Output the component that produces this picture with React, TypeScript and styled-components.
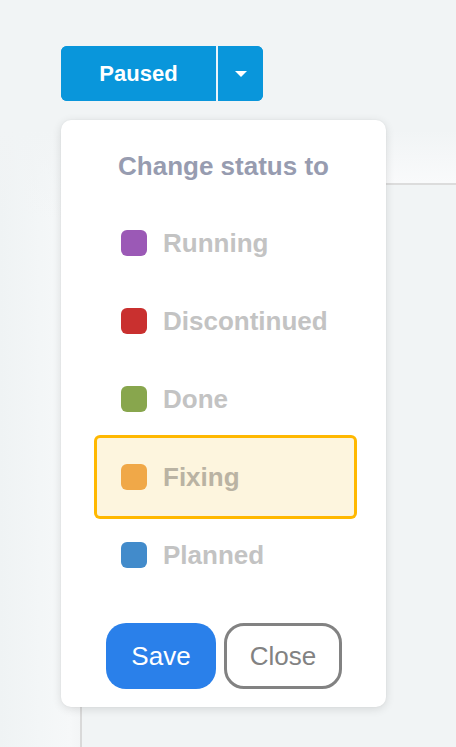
import React from "react";
import styled, { createGlobalStyle } from "styled-components";

const GlobalStyle = createGlobalStyle`
  * { box-sizing: border-box; }
  html, body { margin: 0; padding: 0; }
  body {
    font-family: "Liberation Sans", Arial, sans-serif;
    background: #f1f4f5;
  }
`;

const Page = styled.div`
  min-height: 100vh;
  display: flex;
  flex-direction: column;
  padding-top: 46px;
  background: #f1f4f5;
`;

const Toolbar = styled.div`
  padding-left: 61px;
  position: relative;
  z-index: 2;
`;

const Dropdown = styled.div`
  position: relative;
  display: inline-block;
`;

const SplitButton = styled.div`
  display: flex;
  height: 55px;
  border-radius: 6px;
  overflow: hidden;
  background: #0996db;
`;

const MainPart = styled.button`
  width: 155px;
  border: none;
  background: #0996db;
  color: #fff;
  font-family: "Liberation Sans", Arial, sans-serif;
  font-weight: 700;
  font-size: 22px;
  padding: 0;
  cursor: pointer;
`;

const Divider = styled.span`
  width: 2px;
  background: #e9f4fb;
`;

const CaretPart = styled.button`
  width: 45px;
  border: none;
  background: #0996db;
  display: flex;
  align-items: center;
  justify-content: center;
  padding: 0;
  cursor: pointer;
`;

const Caret = styled.span`
  width: 0;
  height: 0;
  border-left: 6.5px solid transparent;
  border-right: 6.5px solid transparent;
  border-top: 6.5px solid #fff;
  margin-top: 1px;
`;

const Popup = styled.div`
  position: absolute;
  top: calc(100% + 19px);
  left: 0;
  width: 325px;
  background: #fff;
  border-radius: 10px;
  box-shadow: 0 2px 10px rgba(0, 0, 0, 0.12), 0 0 2px rgba(0, 0, 0, 0.05);
  padding: 31px 0 18px;
  display: flex;
  flex-direction: column;
`;

const Title = styled.div`
  text-align: center;
  font-size: 26px;
  line-height: 30px;
  font-weight: 700;
  color: #979cb0;
  margin-bottom: 23px;
`;

const ItemList = styled.div`
  display: flex;
  flex-direction: column;
  padding: 0 32px 0 36px;
`;

const Item = styled.div<{ $selected?: boolean }>`
  height: 78px;
  display: flex;
  align-items: center;
  gap: 16px;
  padding-left: 24px;
  border-radius: 3px;
  background: ${(p) => (p.$selected ? "#fdf5de" : "transparent")};
  box-shadow: ${(p) => (p.$selected ? "0 0 0 3px #ffb800" : "none")};
  color: ${(p) => (p.$selected ? "#bab3a3" : "#c3c3c3")};
  font-size: 26px;
  line-height: 30px;
  font-weight: 700;
`;

const Swatch = styled.span<{ $color: string }>`
  width: 26px;
  height: 26px;
  border-radius: 6px;
  background: ${(p) => p.$color};
  flex: none;
`;

const Actions = styled.div`
  display: flex;
  gap: 8px;
  padding-left: 45px;
  margin-top: 29px;
`;

const SaveButton = styled.button`
  width: 110px;
  height: 66px;
  border: none;
  border-radius: 20px;
  background: #2a80ea;
  color: #fff;
  font-family: "Liberation Sans", Arial, sans-serif;
  font-size: 26px;
  padding: 0;
  cursor: pointer;
`;

const CloseButton = styled.button`
  width: 118px;
  height: 66px;
  border: 3px solid #828282;
  border-radius: 20px;
  background: #fff;
  color: #828282;
  font-family: "Liberation Sans", Arial, sans-serif;
  font-size: 26px;
  padding: 0;
  cursor: pointer;
`;

const Content = styled.div`
  flex: 1;
  display: flex;
  margin-top: 29px;
`;

const SideStrip = styled.div`
  width: 80px;
  flex: none;
  background:
    linear-gradient(to bottom, #f1f4f5 0px, rgba(241, 244, 245, 0) 90px),
    linear-gradient(to right, #eff3f4 0px, #f3f6f7 40px, #f6f8f9 70px, #f3f5f6 80px);
`;

const Panel = styled.div`
  flex: 1;
  display: flex;
  flex-direction: column;
`;

const PanelHeader = styled.div`
  height: 55px;
  background: linear-gradient(to bottom, #f1f4f5, #f9fafb);
  border-bottom: 2px solid #dcdcdc;
`;

const PanelBody = styled.div`
  flex: 1;
  border-left: 2px solid #d9d9d9;
`;

const statuses = [
  { label: "Running", color: "#9b59b6" },
  { label: "Discontinued", color: "#c9302f" },
  { label: "Done", color: "#88a64d" },
  { label: "Fixing", color: "#f0a848" },
  { label: "Planned", color: "#428bcb" },
];

export default function App() {
  return (
    <>
      <GlobalStyle />
      <Page>
        <Toolbar>
          <Dropdown>
            <SplitButton>
              <MainPart>Paused</MainPart>
              <Divider />
              <CaretPart aria-label="Toggle">
                <Caret />
              </CaretPart>
            </SplitButton>
            <Popup>
              <Title>Change status to</Title>
              <ItemList>
                {statuses.map((s) => (
                  <Item key={s.label} $selected={s.label === "Fixing"}>
                    <Swatch $color={s.color} />
                    {s.label}
                  </Item>
                ))}
              </ItemList>
              <Actions>
                <SaveButton>Save</SaveButton>
                <CloseButton>Close</CloseButton>
              </Actions>
            </Popup>
          </Dropdown>
        </Toolbar>
        <Content>
          <SideStrip />
          <Panel>
            <PanelHeader />
            <PanelBody />
          </Panel>
        </Content>
      </Page>
    </>
  );
}
